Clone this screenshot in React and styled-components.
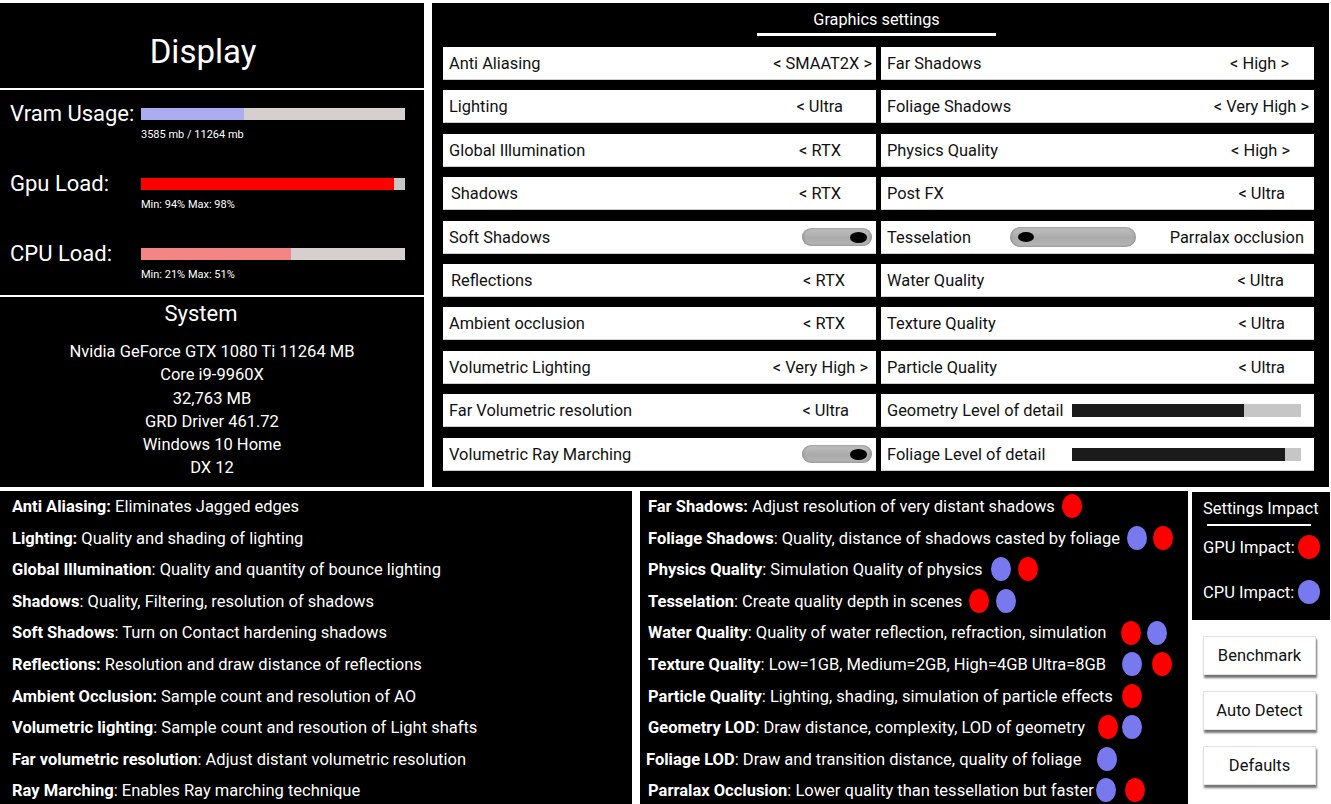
import React from 'react';
import styled, { createGlobalStyle } from 'styled-components';

const GlobalStyle = createGlobalStyle`
  body {
    margin: 0;
    background: #fff;
    font-family: Roboto, "Liberation Sans", sans-serif;
    overflow: hidden;
  }
`;

const RED = '#ff0000';
const BLUE = '#7878ef';

const metrics = [
  { label: 'Vram Usage:', fill: 39, color: '#abadf0', track: '#d6cfcf', caption: '3585 mb / 11264 mb' },
  { label: 'Gpu Load:', fill: 96, color: '#ff0000', track: '#c9c6c6', caption: 'Min: 94% Max: 98%' },
  { label: 'CPU Load:', fill: 57, color: '#f38585', track: '#d6cfcf', caption: 'Min: 21% Max: 51%' },
];

const systemInfo = [
  'Nvidia GeForce GTX 1080 Ti 11264 MB',
  'Core i9-9960X',
  '32,763 MB',
  'GRD Driver 461.72',
  'Windows 10 Home',
  'DX 12',
];

const leftSettings = [
  { label: 'Anti Aliasing', value: '< SMAAT2X >', pad: 4 },
  { label: 'Lighting', value: '< Ultra', pad: 33 },
  { label: 'Global Illumination', value: '< RTX', pad: 35 },
  { label: 'Shadows', value: '< RTX', pad: 35, indent: 8 },
  { label: 'Soft Shadows', toggle: true },
  { label: 'Reflections', value: '< RTX', pad: 31, indent: 8 },
  { label: 'Ambient occlusion', value: '< RTX', pad: 31 },
  { label: 'Volumetric Lighting', value: '< Very High >', pad: 8 },
  { label: 'Far Volumetric resolution', value: '< Ultra', pad: 27 },
  { label: 'Volumetric Ray Marching', toggle: true },
];

const rightSettings = [
  { label: 'Far Shadows', value: '< High >', pad: 25 },
  { label: 'Foliage Shadows', value: '< Very High >', pad: 5 },
  { label: 'Physics Quality', value: '< High >', pad: 24 },
  { label: 'Post FX', value: '< Ultra', pad: 29 },
  { label: 'Tesselation', switchTo: 'Parralax occlusion' },
  { label: 'Water Quality', value: '< Ultra', pad: 30 },
  { label: 'Texture Quality', value: '< Ultra', pad: 29 },
  { label: 'Particle Quality', value: '< Ultra', pad: 29 },
  { label: 'Geometry Level of detail', slider: 75 },
  { label: 'Foliage Level of detail', slider: 93 },
];

const descriptions = [
  { term: 'Anti Aliasing:', text: ' Eliminates Jagged edges' },
  { term: 'Lighting:', text: ' Quality and shading of lighting' },
  { term: 'Global Illumination', text: ': Quality and quantity of bounce lighting' },
  { term: 'Shadows', text: ': Quality, Filtering, resolution of shadows' },
  { term: 'Soft Shadows', text: ': Turn on Contact hardening shadows' },
  { term: 'Reflections:', text: ' Resolution and draw distance of reflections' },
  { term: 'Ambient Occlusion:', text: ' Sample count and resolution of AO' },
  { term: 'Volumetric lighting', text: ': Sample count and resoution of Light shafts' },
  { term: 'Far volumetric resolution', text: ': Adjust distant volumetric resolution' },
  { term: 'Ray Marching', text: ': Enables Ray marching technique' },
];

const impacts = [
  { term: 'Far Shadows:', text: ' Adjust resolution of very distant shadows', dots: ['r'], lead: 7 },
  { term: 'Foliage Shadows', text: ': Quality, distance of shadows casted by foliage', dots: ['b', 'r'], lead: 7, gap: 6 },
  { term: 'Physics Quality', text: ': Simulation Quality of physics', dots: ['b', 'r'], lead: 8, gap: 7 },
  { term: 'Tesselation', text: ': Create quality depth in scenes', dots: ['r', 'b'], lead: 7, gap: 7 },
  { term: 'Water Quality', text: ': Quality of water reflection, refraction, simulation', dots: ['r', 'b'], lead: 15, gap: 6 },
  { term: 'Texture Quality', text: ': Low=1GB, Medium=2GB, High=4GB Ultra=8GB', dots: ['b', 'r'], lead: 16, gap: 10 },
  { term: 'Particle Quality', text: ': Lighting, shading, simulation of particle effects', dots: ['r'], lead: 9 },
  { term: 'Geometry LOD', text: ': Draw distance, complexity, LOD of geometry', dots: ['r', 'b'], lead: 13, gap: 4 },
  { term: 'Foliage LOD', text: ': Draw and transition distance, quality of foliage', dots: ['b'], lead: 16, shift: -2 },
  { term: 'Parralax Occlusion', text: ': Lower quality than tessellation but faster', dots: ['b', 'r'], lead: 2, gap: 9 },
];

const Page = styled.div`
  display: flex;
  flex-direction: column;
  gap: 4px;
  padding-top: 3px;
  width: 1331px;
`;

const TopRow = styled.div`
  display: flex;
  gap: 8px;
  height: 484px;
`;

const BottomRow = styled.div`
  display: flex;
  height: 313px;
`;

/* ---------- display panel ---------- */

const DisplayPanel = styled.div`
  width: 424px;
  display: flex;
  flex-direction: column;
  gap: 2px;
  background: #fff;
`;

const DisplayHeader = styled.div`
  height: 85px;
  background: #000;
  color: #fff;
  display: flex;
  align-items: center;
  justify-content: center;
  box-sizing: border-box;
  padding: 11px 18px 0 0;
  font-size: 33px;
`;

const Metrics = styled.div`
  height: 205px;
  background: #000;
  box-sizing: border-box;
  padding: 11px 0 0 10px;
  display: flex;
  flex-direction: column;
  gap: 30px;
`;

const MetricRow = styled.div`
  display: flex;
  align-items: flex-start;
`;

const MetricLabel = styled.div`
  width: 131px;
  color: #fff;
  font-size: 22px;
  line-height: 26px;
`;

const MetricBody = styled.div`
  width: 264px;
  padding-top: 7px;
`;

const Track = styled.div`
  height: 12px;
  background: ${p => p.$track};
  display: flex;
`;

const Fill = styled.div`
  height: 100%;
  background: ${p => p.$color};
`;

const Caption = styled.div`
  margin-top: 9px;
  color: #fff;
  font-size: 11px;
  line-height: 12px;
`;

const SystemBox = styled.div`
  flex: 1;
  background: #000;
  color: #fff;
  text-align: center;
  padding-top: 5px;
`;

const SystemTitle = styled.div`
  font-size: 22px;
  line-height: 24px;
  padding-right: 22px;
  margin-bottom: 14px;
`;

const SystemLine = styled.div`
  font-size: 16.5px;
  line-height: 23.3px;
`;

/* ---------- graphics settings ---------- */

const GraphicsPanel = styled.div`
  width: 897px;
  background: #000;
  box-sizing: border-box;
  padding: 8px 15px 0 11px;
`;

const GraphicsTitle = styled.div`
  color: #fff;
  font-size: 16.3px;
  line-height: 18px;
  text-align: center;
  padding-right: 4px;
`;

const TitleRule = styled.div`
  width: 239px;
  height: 3px;
  background: #fff;
  margin: 4px auto 0;
  position: relative;
  left: -2px;
`;

const Columns = styled.div`
  display: flex;
  gap: 5px;
  margin-top: 11px;
`;

const Column = styled.div`
  width: 433px;
  display: flex;
  flex-direction: column;
  gap: 10.4px;
`;

const SettingRow = styled.div`
  height: 33px;
  background: #fff;
  display: flex;
  align-items: center;
  padding-left: ${p => p.$indent || 6}px;
  color: #111;
  font-size: 16.4px;
  white-space: nowrap;
  box-sizing: border-box;
  box-shadow: inset 0 -1px 0 #cfcfcf;
`;

const Value = styled.span`
  margin-left: auto;
  padding-right: ${p => p.$pad}px;
`;

const Toggle = styled.div`
  width: ${p => p.$w}px;
  height: ${p => p.$h}px;
  border-radius: 999px;
  background: linear-gradient(to bottom, #c2c2c2, #aaaaaa 55%, #b8b8b8);
  box-shadow: inset 0 0 3px rgba(0, 0, 0, 0.35);
  display: flex;
  align-items: center;
  justify-content: ${p => (p.$on ? 'flex-end' : 'flex-start')};
  padding: 0 ${p => p.$inset}px;
  box-sizing: border-box;
  margin-left: ${p => p.$ml};
  margin-right: ${p => p.$mr || 0}px;
`;

const Knob = styled.div`
  width: ${p => p.$w}px;
  height: ${p => p.$h}px;
  border-radius: 50%;
  background: #000;
`;

const SwitchText = styled.span`
  margin-left: auto;
  padding-right: 10px;
`;

const Slider = styled.div`
  width: 229px;
  height: 13px;
  margin-left: auto;
  margin-right: 13px;
  background: #c6c6c6;
  display: flex;
`;

const SliderFill = styled.div`
  height: 100%;
  background: #1b1b1b;
`;

/* ---------- bottom ---------- */

const DescPanel = styled.div`
  width: ${p => p.$w}px;
  margin-right: ${p => p.$mr}px;
  background: #000;
  color: #fff;
  font-size: 16.5px;
  line-height: 31.6px;
  padding-left: ${p => p.$pl}px;
  box-sizing: border-box;
  white-space: nowrap;
  overflow: hidden;
`;

const DescLine = styled.div`
  margin-left: ${p => p.$shift || 0}px;
`;

const Term = styled.b`
  font-weight: 700;
`;

const Dot = styled.span`
  display: inline-block;
  width: 20px;
  height: 24px;
  border-radius: 50%;
  vertical-align: middle;
  margin-top: -3px;
  background: ${p => (p.$c === 'r' ? RED : BLUE)};
  margin-left: ${p => p.$ml}px;
`;

const SideColumn = styled.div`
  width: 139px;
  display: flex;
  flex-direction: column;
  padding-top: 1px;
`;

const ImpactBox = styled.div`
  width: 138px;
  height: 128px;
  background: #000;
  color: #fff;
  box-sizing: border-box;
  padding: 8px 0 0 11px;
  font-size: 16.5px;
`;

const ImpactTitle = styled.div`
  line-height: 18px;
`;

const ImpactRule = styled.div`
  width: 104px;
  height: 2px;
  background: #fff;
  margin: 6px 0 9px 4px;
`;

const ImpactRow = styled.div`
  display: flex;
  align-items: center;
  height: 24px;
  margin-bottom: 21px;
`;

const ImpactDot = styled.span`
  width: 22px;
  height: 24px;
  border-radius: 50%;
  background: ${p => p.$color};
  margin-left: auto;
  margin-right: 10px;
`;

const Buttons = styled.div`
  display: flex;
  flex-direction: column;
  gap: 16px;
  padding: 16px 0 0 11px;
`;

const ActionButton = styled.button`
  width: 113px;
  height: 39px;
  background: #fff;
  border: 1px solid #e2e2e2;
  box-shadow: 1px 3px 2px rgba(0, 0, 0, 0.55);
  font-family: Roboto, "Liberation Sans", sans-serif;
  font-size: 16.5px;
  color: #111;
  padding: 0;
  cursor: pointer;
`;

function Setting({ item }) {
  return (
    <SettingRow $indent={item.indent}>
      <span>{item.label}</span>
      {item.value && <Value $pad={item.pad}>{item.value}</Value>}
      {item.toggle && (
        <Toggle $w={70} $h={18} $on $inset={5} $ml="auto" $mr={4}>
          <Knob $w={17} $h={11} />
        </Toggle>
      )}
      {item.switchTo && (
        <>
          <Toggle $w={126} $h={20} $inset={8} $ml="39px">
            <Knob $w={16} $h={10} />
          </Toggle>
          <SwitchText>{item.switchTo}</SwitchText>
        </>
      )}
      {item.slider !== undefined && (
        <Slider>
          <SliderFill style={{ width: `${item.slider}%` }} />
        </Slider>
      )}
    </SettingRow>
  );
}

export default function App() {
  return (
    <>
      <GlobalStyle />
      <Page>
        <TopRow>
          <DisplayPanel>
            <DisplayHeader>Display</DisplayHeader>
            <Metrics>
              {metrics.map(m => (
                <MetricRow key={m.label}>
                  <MetricLabel>{m.label}</MetricLabel>
                  <MetricBody>
                    <Track $track={m.track}>
                      <Fill $color={m.color} style={{ width: `${m.fill}%` }} />
                    </Track>
                    <Caption>{m.caption}</Caption>
                  </MetricBody>
                </MetricRow>
              ))}
            </Metrics>
            <SystemBox>
              <SystemTitle>System</SystemTitle>
              {systemInfo.map(line => (
                <SystemLine key={line}>{line}</SystemLine>
              ))}
            </SystemBox>
          </DisplayPanel>

          <GraphicsPanel>
            <GraphicsTitle>Graphics settings</GraphicsTitle>
            <TitleRule />
            <Columns>
              <Column>
                {leftSettings.map(s => <Setting key={s.label} item={s} />)}
              </Column>
              <Column>
                {rightSettings.map(s => <Setting key={s.label} item={s} />)}
              </Column>
            </Columns>
          </GraphicsPanel>
        </TopRow>

        <BottomRow>
          <DescPanel $w={632} $mr={8} $pl={12}>
            {descriptions.map(d => (
              <DescLine key={d.term}>
                <Term>{d.term}</Term>
                {d.text}
              </DescLine>
            ))}
          </DescPanel>

          <DescPanel $w={548} $mr={4} $pl={8}>
            {impacts.map(d => (
              <DescLine key={d.term} $shift={d.shift}>
                <Term>{d.term}</Term>
                {d.text}
                {d.dots.map((c, i) => (
                  <Dot key={i} $c={c} $ml={i === 0 ? d.lead : d.gap} />
                ))}
              </DescLine>
            ))}
          </DescPanel>

          <SideColumn>
            <ImpactBox>
              <ImpactTitle>Settings Impact</ImpactTitle>
              <ImpactRule />
              <ImpactRow>
                GPU Impact:
                <ImpactDot $color={RED} />
              </ImpactRow>
              <ImpactRow>
                CPU Impact:
                <ImpactDot $color={BLUE} />
              </ImpactRow>
            </ImpactBox>
            <Buttons>
              <ActionButton>Benchmark</ActionButton>
              <ActionButton>Auto Detect</ActionButton>
              <ActionButton>Defaults</ActionButton>
            </Buttons>
          </SideColumn>
        </BottomRow>
      </Page>
    </>
  );
}
